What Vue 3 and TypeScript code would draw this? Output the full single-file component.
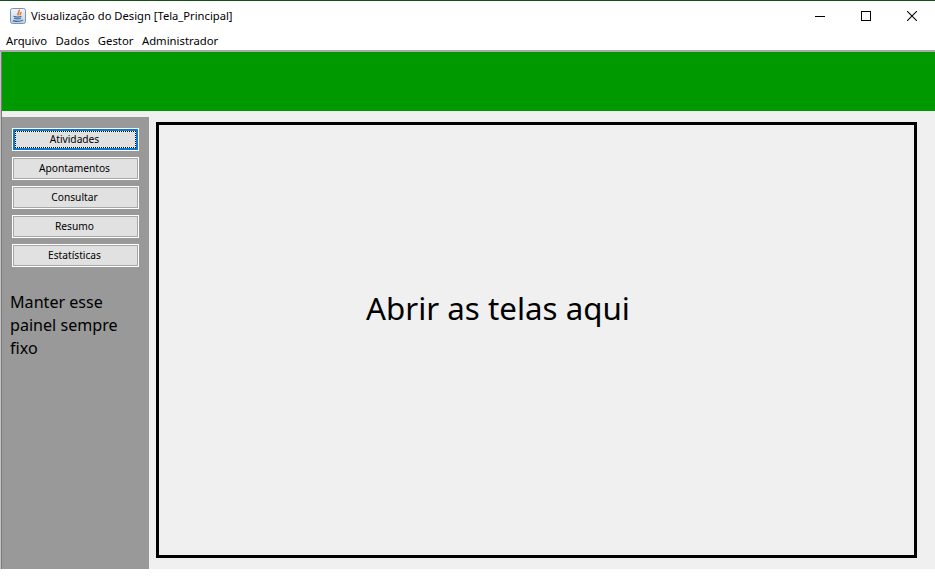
<template>
  <div class="window">
    <header class="title-bar">
      <div class="title-left">
        <svg class="app-icon" width="16" height="16" viewBox="0 0 16 16">
          <defs>
            <linearGradient id="iconBg" x1="0" y1="0" x2="0" y2="1">
              <stop offset="0" stop-color="#f4f7fb" />
              <stop offset="1" stop-color="#bccfe6" />
            </linearGradient>
          </defs>
          <rect x="0.5" y="0.5" width="15" height="15" rx="2" fill="url(#iconBg)" stroke="#7f93ad" />
          <path d="M9 1.800c1.600 1.700-2.600 2.800-.6 5.600M11 4c.6 1.100-1.700 1.700-.6 3.200" fill="none" stroke="#e2701f" stroke-width="1.400" />
          <path d="M3.500 8.300c2 .8 6 .8 8 0M4 10.300c2 .7 5 .7 7 0M2.800 12.600c3 1 7.500 1 10.200-.5" fill="none" stroke="#3f6a9c" stroke-width="1.200" />
        </svg>
        <span class="title-text">Visualização do Design [Tela_Principal]</span>
      </div>
      <div class="window-controls">
        <button class="control" aria-label="Minimizar">
          <svg width="10" height="10" viewBox="0 0 10 10"><path d="M0 5.500h10" stroke="#000" fill="none" /></svg>
        </button>
        <button class="control" aria-label="Maximizar">
          <svg width="10" height="10" viewBox="0 0 10 10"><rect x="0.500" y="0.500" width="9" height="9" stroke="#000" fill="none" /></svg>
        </button>
        <button class="control" aria-label="Fechar">
          <svg width="10" height="10" viewBox="0 0 10 10"><path d="M0 0l10 10M10 0L0 10" stroke="#000" fill="none" stroke-width="1.050" /></svg>
        </button>
      </div>
    </header>

    <nav class="menu-bar">
      <span v-for="item in menus" :key="item" class="menu-item">{{ item }}</span>
    </nav>

    <div class="lower">
      <div class="lower-inner">
        <div class="banner"></div>

        <div class="body">
          <aside class="side-panel">
            <div class="buttons">
              <button
                v-for="(label, i) in actions"
                :key="label"
                class="action"
                :class="{ focused: i === 0 }"
              >
                <span class="action-label">{{ label }}</span>
              </button>
            </div>
            <p class="panel-note">Manter esse painel sempre fixo</p>
          </aside>
          <main class="content">
            <div class="frame">
              <span class="frame-text">Abrir as telas aqui</span>
            </div>
          </main>
        </div>
      </div>
    </div>
  </div>
</template>

<script setup lang="ts">
const menus: string[] = ["Arquivo", "Dados", "Gestor", "Administrador"];
const actions: string[] = ["Atividades", "Apontamentos", "Consultar", "Resumo", "Estatísticas"];
</script>

<style>
html,
body {
  margin: 0;
  background: #fff;
}
</style>

<style scoped>
.window {
  width: 935px;
  height: 569px;
  display: flex;
  flex-direction: column;
  font-family: "Noto Sans", "Open Sans", sans-serif;
  color: #000;
  background: #f0f0f0;
  overflow: hidden;
}

.title-bar {
  height: 30px;
  flex: none;
  display: flex;
  justify-content: space-between;
  background: #fff;
  border-top: 1px solid #14501a;
}

.title-left {
  display: flex;
  align-items: center;
  gap: 5px;
  padding-left: 10px;
}

.title-text {
  font-size: 11.2px;
  white-space: nowrap;
  padding-bottom: 2px;
}

.window-controls {
  display: flex;
}

.control {
  width: 46px;
  padding: 0;
  border: none;
  background: none;
  display: flex;
  align-items: center;
  justify-content: center;
}

.menu-bar {
  height: 19px;
  flex: none;
  display: flex;
  align-items: center;
  gap: 8.5px;
  padding-left: 6px;
  background: #fff;
  border-bottom: 2px solid #a9a9a9;
  font-size: 11.3px;
}

.lower {
  flex: 1;
  min-height: 0;
  display: flex;
  background: #f0f0f0;
  border-left: 1px solid #c4c4c4;
}

.lower-inner {
  flex: 1;
  min-width: 0;
  display: flex;
  flex-direction: column;
  border-left: 1px solid #7a7a7a;
}

.banner {
  height: 59px;
  background: #009900;
  flex: none;
}

.body {
  flex: 1;
  display: flex;
  min-height: 0;
  padding-top: 6px;
}

.side-panel {
  width: 147px;
  flex: none;
  background: #999;
  padding: 11px 0 0 10px;
  box-sizing: border-box;
}

.buttons {
  display: flex;
  flex-direction: column;
  gap: 6px;
}

.action {
  width: 127px;
  height: 23px;
  padding: 0;
  display: flex;
  border: 1px solid #fff;
  background: #e1e1e1;
  box-shadow: inset 0 0 0 1px #a8a8a8;
  font: 10.2px "Noto Sans", "Open Sans", sans-serif;
  color: #000;
}

.action-label {
  flex: 1;
  display: flex;
  align-items: center;
  justify-content: center;
  padding: 0 2px 2px 0;
}

.action.focused {
  box-shadow: inset 0 0 0 2px #0a78d7;
}

.action.focused .action-label {
  margin: 2px;
  border: 1px dotted #000;
  background: linear-gradient(#e1e1e1, #e1e1e1) padding-box, #fff;
}

.panel-note {
  width: 125px;
  margin: 24px 0 0 -2px;
  font-size: 16.1px;
  line-height: 23px;
}

.content {
  flex: 1;
  padding: 5px 18px 11px 7px;
  min-width: 0;
}

.frame {
  height: 100%;
  box-sizing: border-box;
  border: 3px solid #000;
  padding: 161px 0 0 207px;
}

.frame-text {
  font-size: 31.3px;
  line-height: 44px;
  white-space: nowrap;
}
</style>
